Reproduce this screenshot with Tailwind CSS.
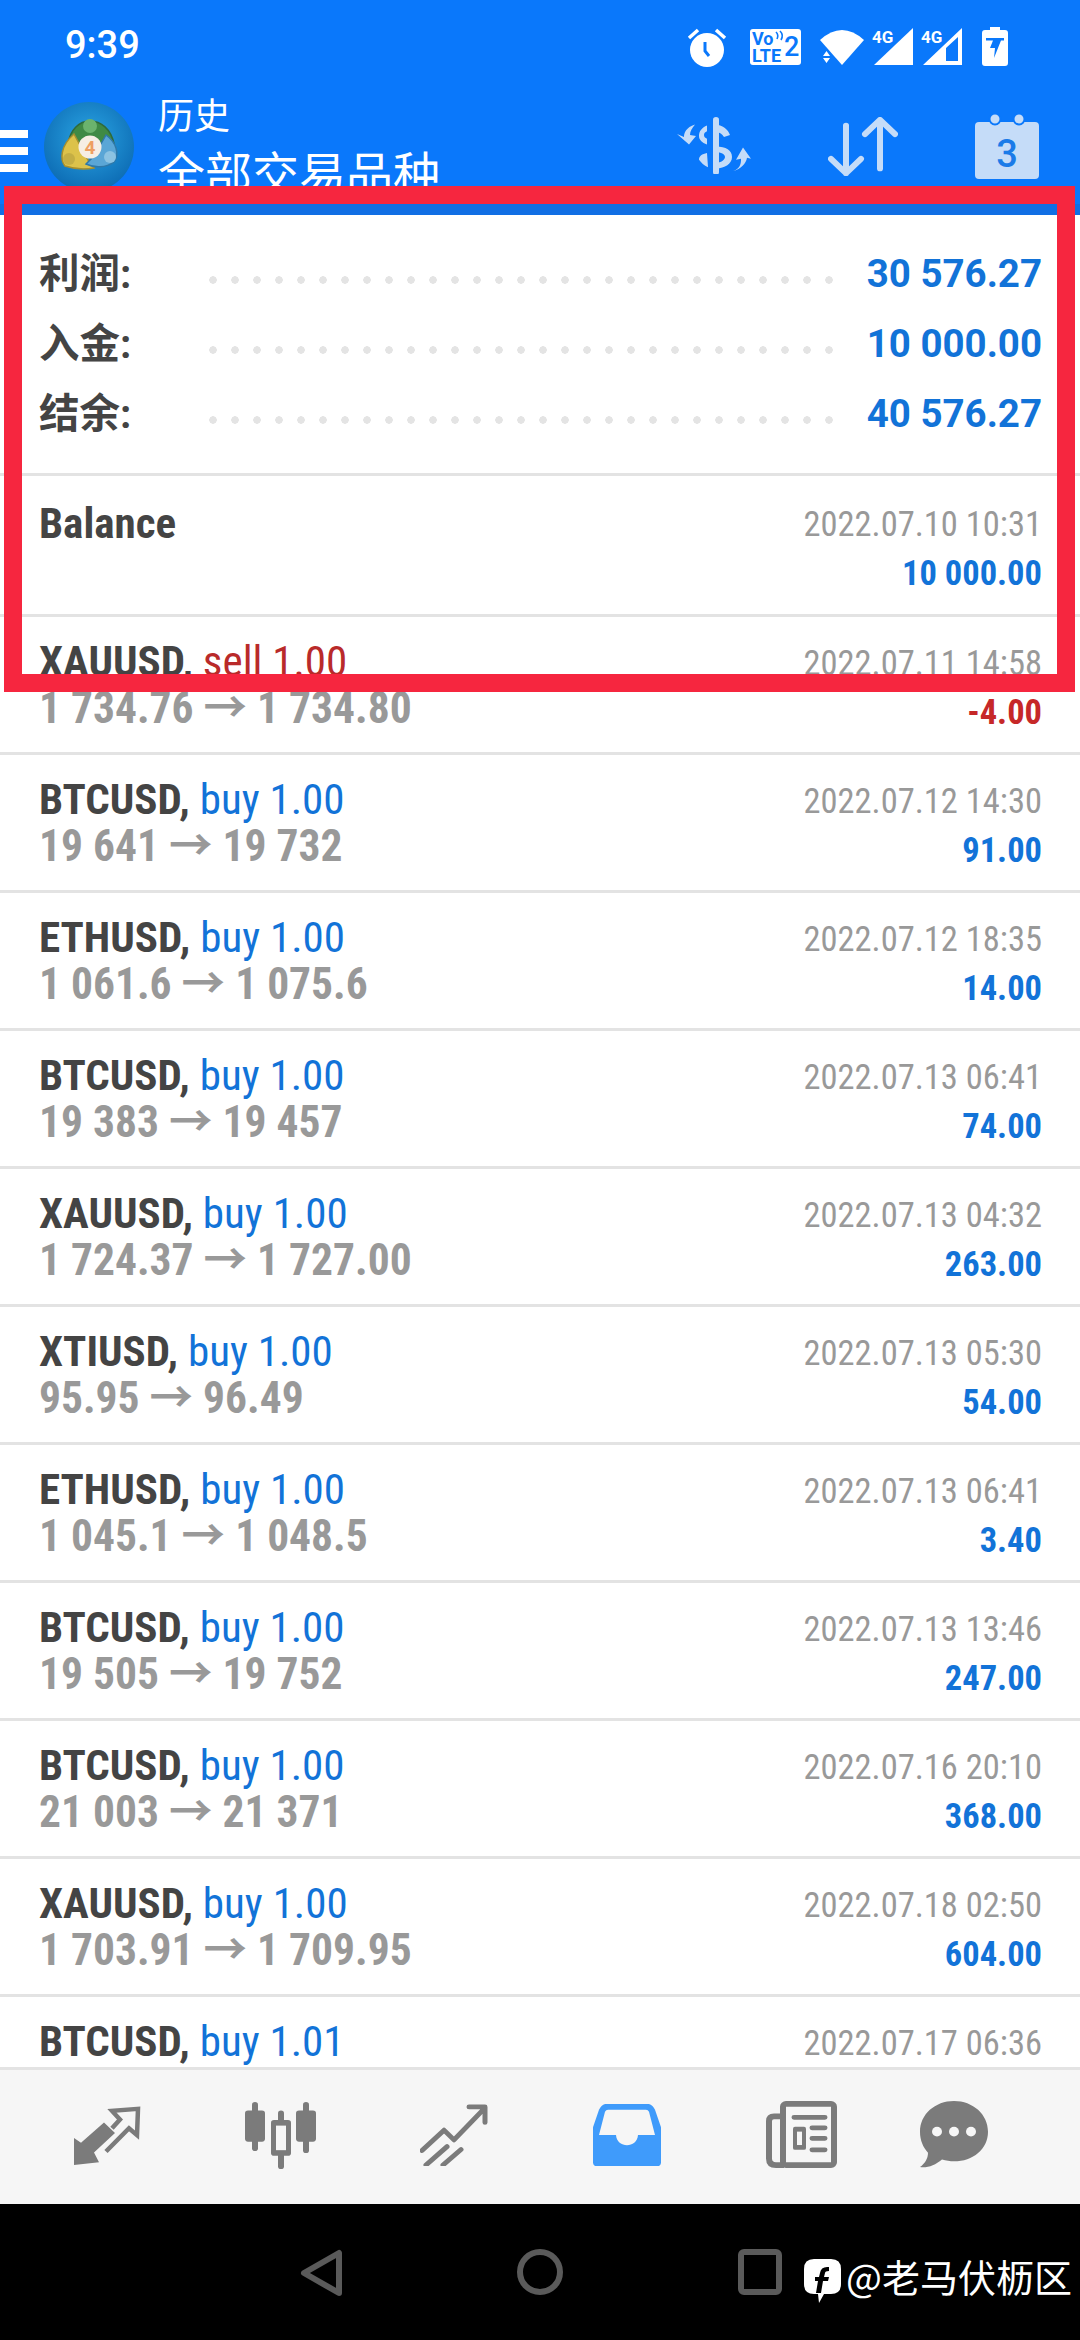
<!DOCTYPE html>
<html lang="zh">
<head>
  <meta charset="UTF-8" />
  <title>历史</title>
  <script src="https://cdn.jsdelivr.net/npm/@tailwindcss/browser@4"></script>
</head>
<body class="bg-white">
  <div class="relative w-[1080px] h-[2340px] overflow-hidden flex flex-col bg-white font-['Roboto','Noto_Sans_CJK_SC',sans-serif]">

    <!-- status bar + toolbar -->
    <header class="h-[215px] shrink-0 bg-[#0a78fb] overflow-hidden border-b-[11px] border-[#116fe4]">
      <div class="h-[90px] flex items-center pl-[65px] pr-[72px] text-white">
        <span class="text-[38px] font-medium">9:39</span>
        <div class="ml-auto flex items-center pt-[3px]">
          <svg class="w-[40px] h-[42px]" viewBox="0 0 40 42" fill="white"><circle cx="20" cy="24" r="17"/><path d="M2 12 11 4M38 12 29 4" stroke="white" stroke-width="3.5"/><path d="M18 16v9l4 5" stroke="#0a78fb" stroke-width="3" fill="none"/></svg>
          <svg class="w-[51px] h-[36px] ml-[23px]" viewBox="0 0 51 36"><rect width="51" height="36" rx="3" fill="white"/><text x="2" y="16" font-size="18" font-weight="700" fill="#0a78fb" class="font-['Roboto']">Vo</text><path d="M26 3Q29 6 27 10M30 2Q34 6 31 11" stroke="#0a78fb" stroke-width="1.6" fill="none"/><text x="2" y="33" font-size="18" font-weight="700" textLength="29" fill="#0a78fb" class="font-['Roboto']">LTE</text><text x="34" y="27" font-size="27" font-weight="500" fill="#0a78fb" class="font-['Roboto']">2</text></svg>
          <svg class="w-[44px] h-[36px] ml-[19px]" viewBox="0 0 44 36" fill="white"><path d="M0 11Q22-9 44 11L22 36Z"/><path d="M3 27 6.500 22 10 27ZM3 29 10 29 6.500 34Z"/></svg>
          <svg class="w-[42px] h-[39px] ml-[8px]" viewBox="0 0 42 39" fill="white"><path d="M41 1V38H2Z"/><text x="0" y="16" font-size="17" font-weight="700" class="font-['Roboto']">4G</text></svg>
          <svg class="w-[42px] h-[39px] ml-[7px]" viewBox="0 0 42 39" fill="white"><path fill-rule="evenodd" d="M41 1V38H2ZM37 10 25 21V34H37Z"/><text x="0" y="16" font-size="17" font-weight="700" class="font-['Roboto']">4G</text></svg>
          <svg class="w-[26px] h-[39px] ml-[19px]" viewBox="0 0 26 39" fill="white"><path d="M8 0h10v3h5a3 3 0 0 1 3 3v30a3 3 0 0 1-3 3H3a3 3 0 0 1-3-3V6a3 3 0 0 1 3-3h5Z"/><path d="M4 11H22V13.500H19L12 31 13 21H8L11 13.500H4Z" fill="#0a78fb"/></svg>
        </div>
      </div>
      <div class="flex h-[124px] relative">
        <div class="w-[28px] mt-[40px] h-[42px] flex flex-col justify-between shrink-0">
          <div class="h-[8px] bg-white"></div><div class="h-[8px] bg-white"></div><div class="h-[8px] bg-white"></div>
        </div>
        <svg class="w-[90px] h-[90px] ml-[16px] mt-[12px] shrink-0" viewBox="0 0 90 90">
          <defs><radialGradient id="lg" cx="50%" cy="40%" r="60%"><stop offset="0" stop-color="#2aa5e4"/><stop offset="1" stop-color="#0d6cb4"/></radialGradient></defs>
          <circle cx="45" cy="45" r="45" fill="url(#lg)"/>
          <path d="M46 19C57 19 67 27 70 42L57 47 46 38 35 47 24 42C26 28 35 19 46 19Z" fill="#3f8a45" stroke="#2f6a3c" stroke-width="1.500"/>
          <circle cx="46" cy="24" r="7" fill="#6bb36d"/>
          <path d="M30 32 44 58 50 66C38 68 27 66 21 64 16 58 16 44 30 32Z" fill="#dcc24a" stroke="#a58f30" stroke-width="1.500"/>
          <circle cx="25" cy="57" r="6" fill="#c4ae44"/>
          <path d="M62 33C72 40 76 52 70 60 62 66 50 66 42 62L50 54Z" fill="#5aa6d6" stroke="#2f78a8" stroke-width="1.500"/>
          <circle cx="66" cy="55" r="6" fill="#8cc3e2"/>
          <circle cx="46" cy="45" r="11.500" fill="#f6eee4"/>
          <text x="46" y="52" text-anchor="middle" font-size="19" font-weight="700" fill="#ee9f62" class="font-['Roboto']">4</text>
        </svg>
        <div class="ml-[24px] text-white leading-none">
          <div class="text-[36px] mt-[9px]">历史</div>
          <div class="text-[47px] mt-[16px]">全部交易品种</div>
        </div>
        <div class="ml-auto flex items-start text-[#c5dcf8]">
          <svg class="w-[74px] h-[57px] mt-[27px]" viewBox="0 0 74 60" preserveAspectRatio="none" fill="#c5dcf8"><path d="M39 3v55" stroke="#c5dcf8" stroke-width="6" stroke-linecap="round"/><path d="M39 8c7 1 12 5 14 11l-6 2c-2-3-4-5-8-5ZM39 31c10 0 16 4 16 11s-7 12-16 12v-6c5 0 9-3 9-6s-4-5-9-5ZM30 9c-5 2-8 6-8 11 0 4 3 7 8 9v-6c-2-1-3-2-3-4s1-3 3-4ZM30 38c-5 1-8 3-8 7 2 3 5 6 9 8Z"/><path d="M18 8C9 11 7 17 7 21l-7-3 12 11 7-9-6-1c0-4 2-7 5-11ZM56 57c8-3 8-9 8-13l-5 1 7-13 8 12-4-1c-1 6-6 12-14 14Z"/></svg>
          <svg class="w-[70px] h-[59px] mt-[27px] ml-[77px]" viewBox="0 0 70 62" preserveAspectRatio="none" fill="none" stroke="#c5dcf8" stroke-width="6" stroke-linecap="round" stroke-linejoin="round"><path d="M18 9V59M3 44 18 59 33 44M52 3V54M37 18 52 3 67 18"/></svg>
          <svg class="w-[64px] h-[66px] mt-[23px] ml-[77px] mr-[41px]" viewBox="0 0 64 66"><rect y="9" width="64" height="57" rx="4" fill="#c5dcf8"/><circle cx="20" cy="6" r="5.500" fill="#c5dcf8" stroke="#0a78fb" stroke-width="2"/><circle cx="44" cy="6" r="5.500" fill="#c5dcf8" stroke="#0a78fb" stroke-width="2"/><text x="32" y="54" text-anchor="middle" font-size="38" font-weight="500" fill="#1b7be8" class="font-['Roboto']">3</text></svg>
        </div>
      </div>
    </header>

    <main class="h-[1852px] shrink-0 overflow-hidden text-[#444] font-stretch-condensed">
      <!-- summary -->
      <section class="h-[261px] pt-[24px] pl-[39px] pr-[38px] border-b-[3px] border-[#e3e3e3] font-stretch-normal">
        <div class="flex items-center h-[70px]">
          <span class="w-[163px] text-[40.5px] font-bold">利润:</span>
          <div class="w-[638px] h-[8px] mt-[12px] bg-[radial-gradient(circle,#e4e4e4_3.5px,transparent_4px)] bg-[length:22px_8px]"></div>
          <span class="ml-auto text-[38.5px] font-bold text-[#1273d8]">30 576.27</span>
        </div>
        <div class="flex items-center h-[70px]">
          <span class="w-[163px] text-[40.5px] font-bold">入金:</span>
          <div class="w-[638px] h-[8px] mt-[12px] bg-[radial-gradient(circle,#e4e4e4_3.5px,transparent_4px)] bg-[length:22px_8px]"></div>
          <span class="ml-auto text-[38.5px] font-bold text-[#1273d8]">10 000.00</span>
        </div>
        <div class="flex items-center h-[70px]">
          <span class="w-[163px] text-[40.5px] font-bold">结余:</span>
          <div class="w-[638px] h-[8px] mt-[12px] bg-[radial-gradient(circle,#e4e4e4_3.5px,transparent_4px)] bg-[length:22px_8px]"></div>
          <span class="ml-auto text-[38.5px] font-bold text-[#1273d8]">40 576.27</span>
        </div>
      </section>

      <!-- balance -->
      <section class="h-[141px] flex justify-between pl-[39px] pr-[38px] pt-[22px] border-b-[3px] border-[#e3e3e3]">
        <span class="text-[43px] leading-[50px] font-bold">Balance</span>
        <div class="text-right mt-[2px]">
          <div class="text-[34.5px] leading-[49px] text-[#999]">2022.07.10 10:31</div>
          <div class="text-[34.5px] leading-[49px] font-bold text-[#1273d8]">10 000.00</div>
        </div>
      </section>

      <!-- deals -->
      <div class="h-[138px] flex justify-between pl-[39px] pr-[38px] pt-[20px] border-b-[3px] border-[#e3e3e3]">
        <div><div class="text-[43px] leading-[48px] font-bold">XAUUSD, <span class="font-normal text-[#b92a2a]">sell 1.00</span></div><div class="text-[43.5px] leading-[48px] font-bold text-[#999]">1 734.76 → 1 734.80</div></div>
        <div class="text-right mt-[2px]"><div class="text-[34.5px] leading-[49px] text-[#999]">2022.07.11 14:58</div><div class="text-[34.5px] leading-[49px] font-bold text-[#c62828]">-4.00</div></div>
      </div>
      <div class="h-[138px] flex justify-between pl-[39px] pr-[38px] pt-[20px] border-b-[3px] border-[#e3e3e3]">
        <div><div class="text-[43px] leading-[48px] font-bold">BTCUSD, <span class="font-normal text-[#1273d8]">buy 1.00</span></div><div class="text-[43.5px] leading-[48px] font-bold text-[#999]">19 641 → 19 732</div></div>
        <div class="text-right mt-[2px]"><div class="text-[34.5px] leading-[49px] text-[#999]">2022.07.12 14:30</div><div class="text-[34.5px] leading-[49px] font-bold text-[#1273d8]">91.00</div></div>
      </div>
      <div class="h-[138px] flex justify-between pl-[39px] pr-[38px] pt-[20px] border-b-[3px] border-[#e3e3e3]">
        <div><div class="text-[43px] leading-[48px] font-bold">ETHUSD, <span class="font-normal text-[#1273d8]">buy 1.00</span></div><div class="text-[43.5px] leading-[48px] font-bold text-[#999]">1 061.6 → 1 075.6</div></div>
        <div class="text-right mt-[2px]"><div class="text-[34.5px] leading-[49px] text-[#999]">2022.07.12 18:35</div><div class="text-[34.5px] leading-[49px] font-bold text-[#1273d8]">14.00</div></div>
      </div>
      <div class="h-[138px] flex justify-between pl-[39px] pr-[38px] pt-[20px] border-b-[3px] border-[#e3e3e3]">
        <div><div class="text-[43px] leading-[48px] font-bold">BTCUSD, <span class="font-normal text-[#1273d8]">buy 1.00</span></div><div class="text-[43.5px] leading-[48px] font-bold text-[#999]">19 383 → 19 457</div></div>
        <div class="text-right mt-[2px]"><div class="text-[34.5px] leading-[49px] text-[#999]">2022.07.13 06:41</div><div class="text-[34.5px] leading-[49px] font-bold text-[#1273d8]">74.00</div></div>
      </div>
      <div class="h-[138px] flex justify-between pl-[39px] pr-[38px] pt-[20px] border-b-[3px] border-[#e3e3e3]">
        <div><div class="text-[43px] leading-[48px] font-bold">XAUUSD, <span class="font-normal text-[#1273d8]">buy 1.00</span></div><div class="text-[43.5px] leading-[48px] font-bold text-[#999]">1 724.37 → 1 727.00</div></div>
        <div class="text-right mt-[2px]"><div class="text-[34.5px] leading-[49px] text-[#999]">2022.07.13 04:32</div><div class="text-[34.5px] leading-[49px] font-bold text-[#1273d8]">263.00</div></div>
      </div>
      <div class="h-[138px] flex justify-between pl-[39px] pr-[38px] pt-[20px] border-b-[3px] border-[#e3e3e3]">
        <div><div class="text-[43px] leading-[48px] font-bold">XTIUSD, <span class="font-normal text-[#1273d8]">buy 1.00</span></div><div class="text-[43.5px] leading-[48px] font-bold text-[#999]">95.95 → 96.49</div></div>
        <div class="text-right mt-[2px]"><div class="text-[34.5px] leading-[49px] text-[#999]">2022.07.13 05:30</div><div class="text-[34.5px] leading-[49px] font-bold text-[#1273d8]">54.00</div></div>
      </div>
      <div class="h-[138px] flex justify-between pl-[39px] pr-[38px] pt-[20px] border-b-[3px] border-[#e3e3e3]">
        <div><div class="text-[43px] leading-[48px] font-bold">ETHUSD, <span class="font-normal text-[#1273d8]">buy 1.00</span></div><div class="text-[43.5px] leading-[48px] font-bold text-[#999]">1 045.1 → 1 048.5</div></div>
        <div class="text-right mt-[2px]"><div class="text-[34.5px] leading-[49px] text-[#999]">2022.07.13 06:41</div><div class="text-[34.5px] leading-[49px] font-bold text-[#1273d8]">3.40</div></div>
      </div>
      <div class="h-[138px] flex justify-between pl-[39px] pr-[38px] pt-[20px] border-b-[3px] border-[#e3e3e3]">
        <div><div class="text-[43px] leading-[48px] font-bold">BTCUSD, <span class="font-normal text-[#1273d8]">buy 1.00</span></div><div class="text-[43.5px] leading-[48px] font-bold text-[#999]">19 505 → 19 752</div></div>
        <div class="text-right mt-[2px]"><div class="text-[34.5px] leading-[49px] text-[#999]">2022.07.13 13:46</div><div class="text-[34.5px] leading-[49px] font-bold text-[#1273d8]">247.00</div></div>
      </div>
      <div class="h-[138px] flex justify-between pl-[39px] pr-[38px] pt-[20px] border-b-[3px] border-[#e3e3e3]">
        <div><div class="text-[43px] leading-[48px] font-bold">BTCUSD, <span class="font-normal text-[#1273d8]">buy 1.00</span></div><div class="text-[43.5px] leading-[48px] font-bold text-[#999]">21 003 → 21 371</div></div>
        <div class="text-right mt-[2px]"><div class="text-[34.5px] leading-[49px] text-[#999]">2022.07.16 20:10</div><div class="text-[34.5px] leading-[49px] font-bold text-[#1273d8]">368.00</div></div>
      </div>
      <div class="h-[138px] flex justify-between pl-[39px] pr-[38px] pt-[20px] border-b-[3px] border-[#e3e3e3]">
        <div><div class="text-[43px] leading-[48px] font-bold">XAUUSD, <span class="font-normal text-[#1273d8]">buy 1.00</span></div><div class="text-[43.5px] leading-[48px] font-bold text-[#999]">1 703.91 → 1 709.95</div></div>
        <div class="text-right mt-[2px]"><div class="text-[34.5px] leading-[49px] text-[#999]">2022.07.18 02:50</div><div class="text-[34.5px] leading-[49px] font-bold text-[#1273d8]">604.00</div></div>
      </div>
      <div class="h-[138px] flex justify-between pl-[39px] pr-[38px] pt-[20px]">
        <div><div class="text-[43px] leading-[48px] font-bold">BTCUSD, <span class="font-normal text-[#1273d8]">buy 1.01</span></div></div>
        <div class="text-right mt-[2px]"><div class="text-[34.5px] leading-[49px] text-[#999]">2022.07.17 06:36</div></div>
      </div>
    </main>

    <!-- tabs -->
    <nav class="h-[137px] shrink-0 bg-[#f6f6f6] border-t-[3px] border-[#e3e3e3] flex items-start pt-[36px]">
      <svg class="w-[68px] h-[60px] ml-[74px]" viewBox="0 0 68 62" preserveAspectRatio="none"><path d="M0 61V33L7 38 30 17 41 28 20 48 25 58Z" fill="#7b7b7b"/><path d="M38 23 46 14 38 5 64 3 63 30 55 23 32 47" fill="none" stroke="#7b7b7b" stroke-width="4.500"/></svg>
      <svg class="w-[72px] h-[68px] ml-[103px] -mt-[4px]" viewBox="0 0 72 72" preserveAspectRatio="none" fill="#7b7b7b"><rect x="0" y="9" width="20" height="33" rx="3"/><rect x="7" y="0" width="6" height="52" rx="3"/><rect x="51" y="9" width="20" height="33" rx="3"/><rect x="58" y="0" width="6" height="54" rx="3"/><rect x="26" y="19" width="20" height="38" rx="3"/><rect x="33" y="9" width="6" height="62" rx="3"/><rect x="31" y="25" width="10" height="26" fill="#f6f6f6"/></svg>
      <svg class="w-[68px] h-[62px] ml-[103px] -mt-[2px]" viewBox="0 0 68 64" preserveAspectRatio="none" fill="none" stroke="#7b7b7b" stroke-width="5" stroke-linecap="round" stroke-linejoin="round"><path d="M2 48 24 27 34 37 64 5M49 3H65V19M6 63 27 44M23 63 41 47"/></svg>
      <svg class="w-[68px] h-[62px] ml-[105px] -mt-[2px]" viewBox="0 0 68 64" preserveAspectRatio="none" fill="#3f9bfb"><path d="M14 0H54C58 0 60 2 62 6L68 24V60Q68 64 64 64H4Q0 64 0 60V24L6 6C8 2 10 0 14 0Z"/><path d="M15 6H53Q55 6 56 8L62 32H45C44 46 24 46 23 32H6L12 8Q13 6 15 6Z" fill="#f6f6f6"/></svg>
      <svg class="w-[71px] h-[67px] ml-[105px] -mt-[5px]" viewBox="0 0 71 70" preserveAspectRatio="none" fill="none" stroke="#7b7b7b"><rect x="17" y="3" width="51" height="64" rx="3" stroke-width="6"/><path d="M14 16H8Q3 16 3 21V60Q3 67 10 67H18" stroke-width="6"/><path d="M28 17H59M46 28H59M46 39H59M46 51H59" stroke-width="5" stroke-linecap="round"/><rect x="27" y="27" width="13" height="24" rx="2" fill="#7b7b7b" stroke="none"/><rect x="31" y="32" width="5" height="14" fill="#f6f6f6" stroke="none"/></svg>
      <svg class="w-[68px] h-[67px] ml-[83px] -mt-[5px]" viewBox="0 0 68 70" preserveAspectRatio="none" fill="#7b7b7b"><path d="M34 0C53 0 68 14 68 32S53 63 34 63C30 63 26 62 22 61 15 67 8 70 0 69 5 65 8 60 8 54 3 48 0 41 0 32 0 14 15 0 34 0Z"/><circle cx="17" cy="32" r="5" fill="#f6f6f6"/><circle cx="34" cy="32" r="5" fill="#f6f6f6"/><circle cx="51" cy="32" r="5" fill="#f6f6f6"/></svg>
    </nav>

    <!-- system nav -->
    <footer class="flex-1 bg-black flex items-start pt-[45px]">
      <svg class="w-[44px] h-[48px] ml-[300px]" viewBox="0 0 44 48" fill="none" stroke="#5a5a5a" stroke-width="6" stroke-linejoin="round"><path d="M39 4V44L4 24Z"/></svg>
      <div class="w-[46px] h-[46px] ml-[173px] rounded-full border-[6px] border-[#5a5a5a]"></div>
      <div class="w-[44px] h-[46px] ml-[175px] rounded-[6px] border-[6px] border-[#5a5a5a]"></div>
      <svg class="w-[37px] h-[44px] ml-[22px] mt-[10px]" viewBox="0 0 37 44"><path d="M10 0H27Q37 0 37 10V25Q37 35 27 35H20L15 44 14 35H10Q0 35 0 25V10Q0 0 10 0Z" fill="white"/><path d="M25 8Q17 7 16 14L15 18H11V22H14L12 34H17L19 22H24L25 18H20L21 14Q21 12 25 12Z" fill="black"/></svg>
      <span class="ml-[5px] mt-[2px] text-[38px] leading-[50px] text-white font-['Noto_Sans_CJK_SC',sans-serif] whitespace-nowrap">@老马伏枥区</span>
    </footer>

    <!-- red annotation frame -->
    <div class="absolute left-[4px] top-[186px] w-[1071px] h-[506px] border-[18px] border-[#f6263f] pointer-events-none"></div>
  </div>
</body>
</html>
